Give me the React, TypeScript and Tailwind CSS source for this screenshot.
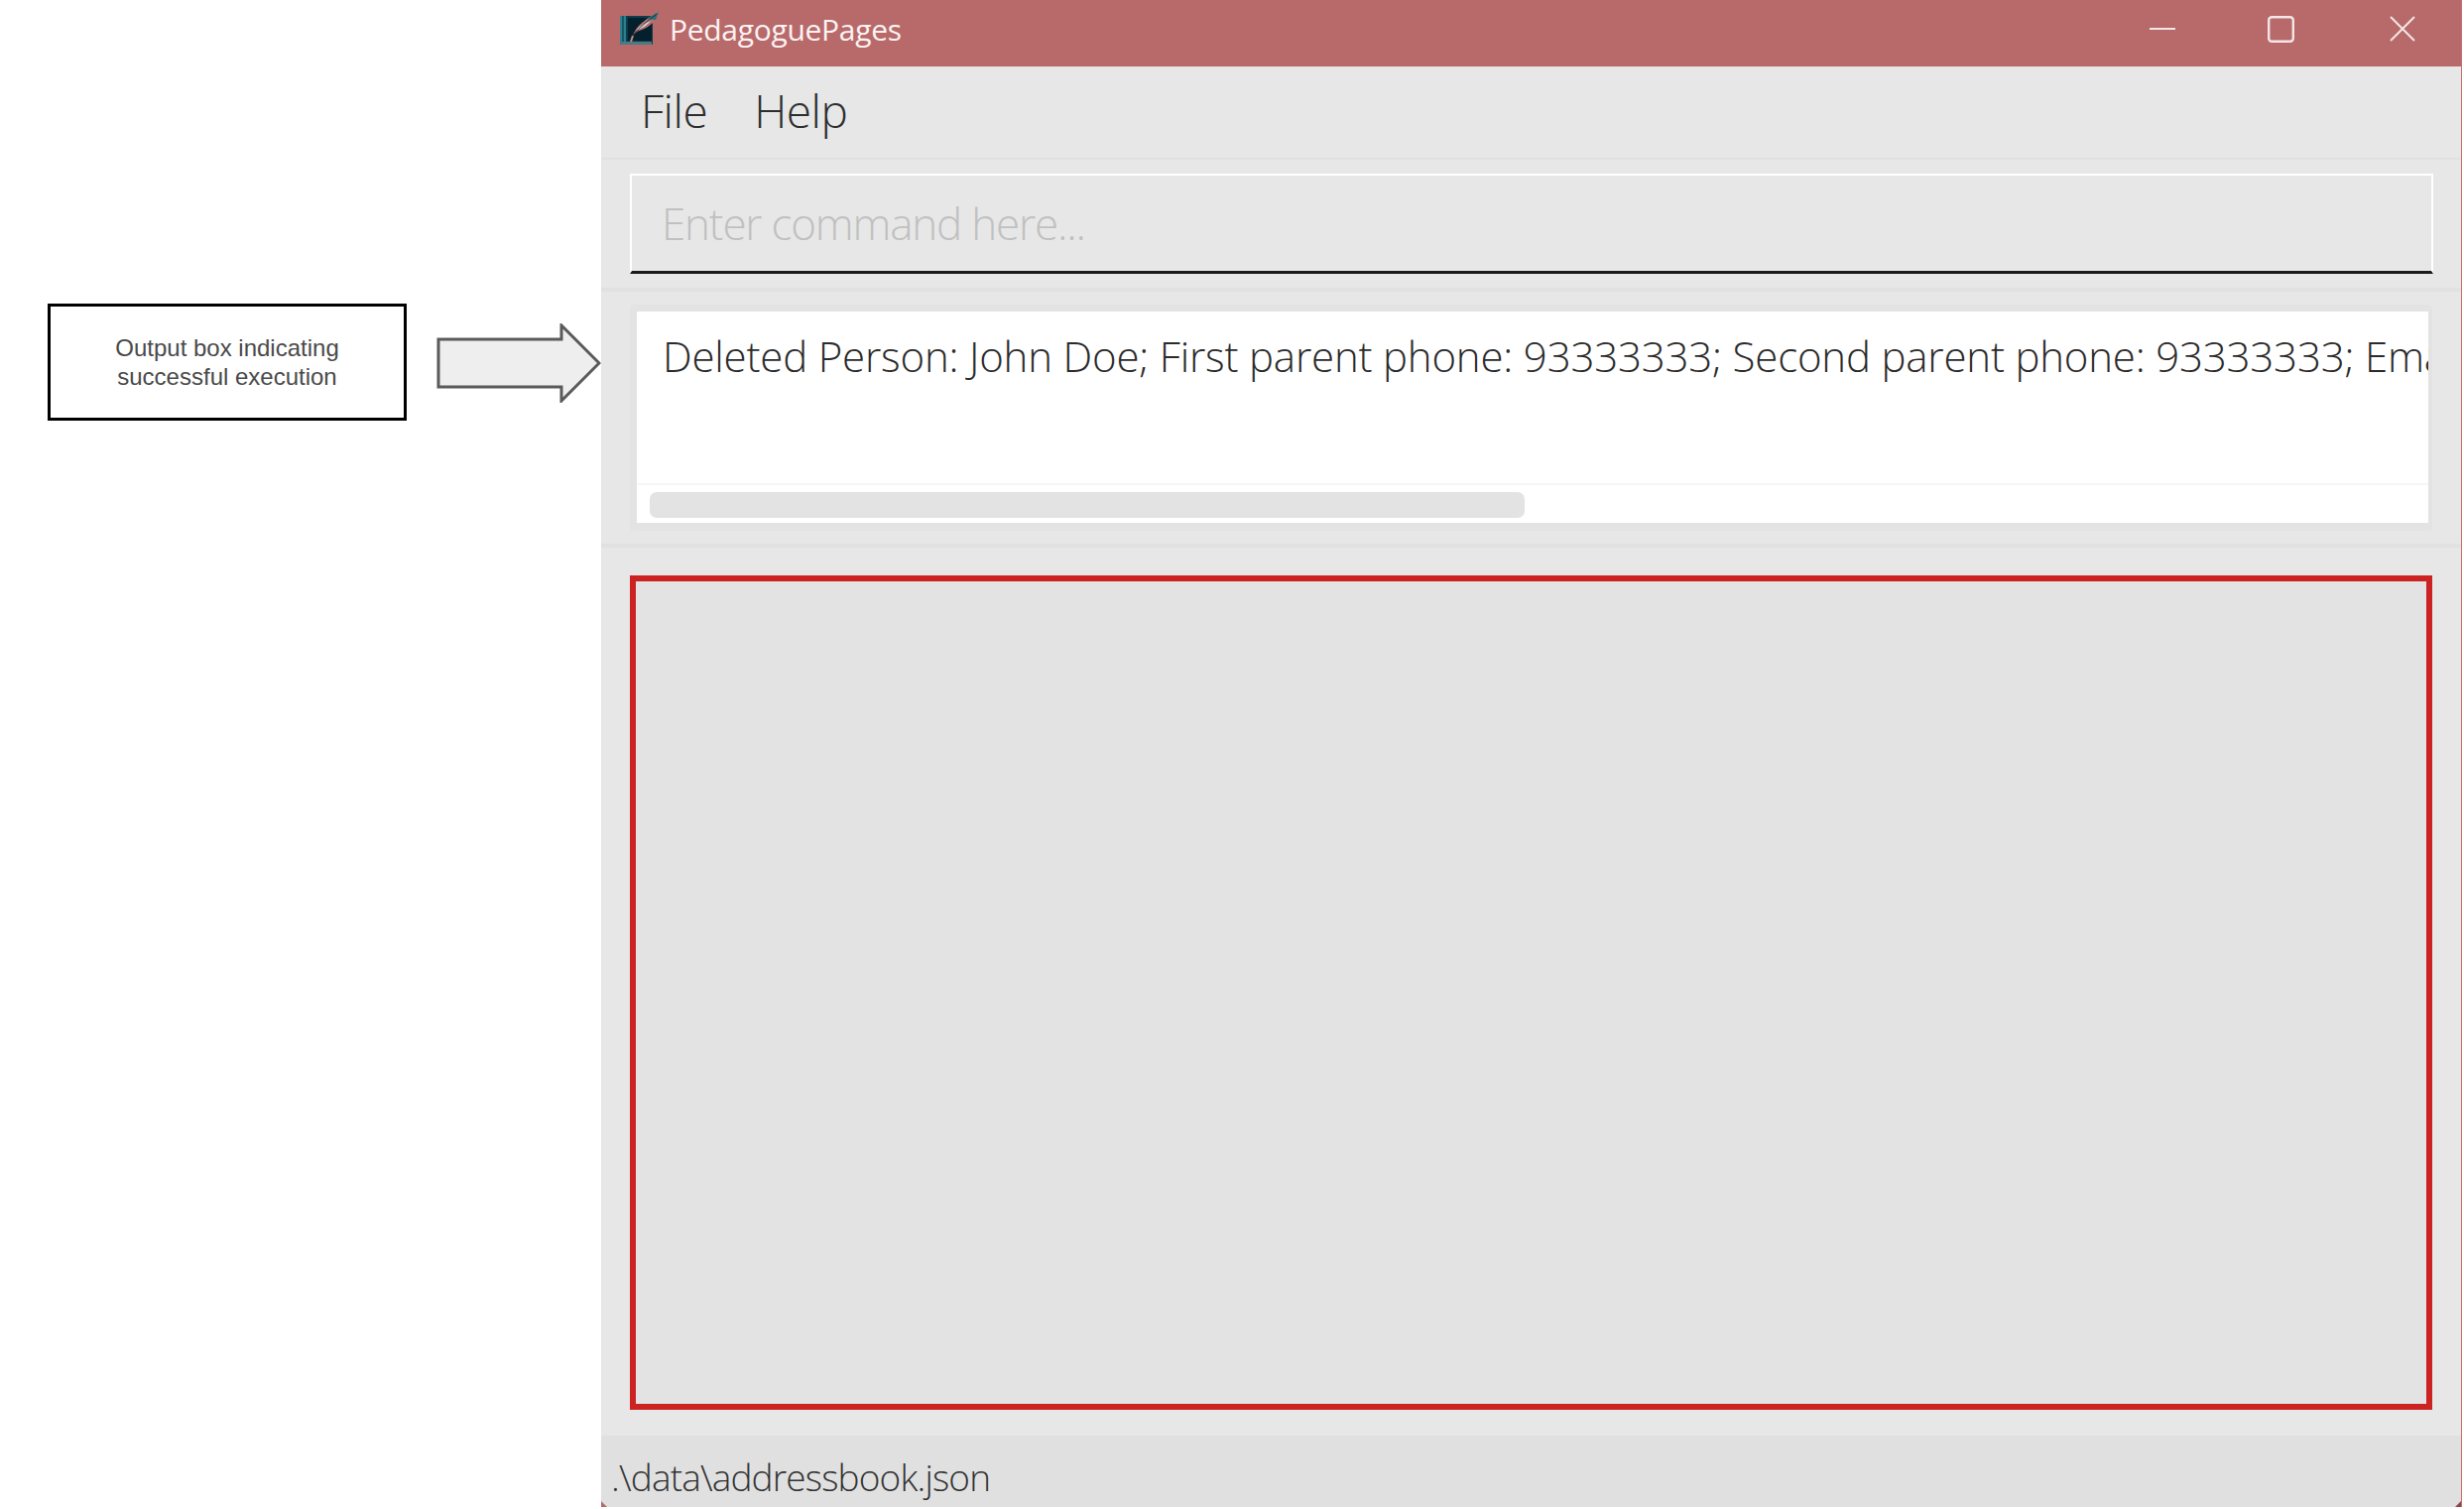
const face = "font-['Open_Sans','Noto_Sans',sans-serif] font-light";

function Logo() {
  return (
    <svg width="40" height="36" viewBox="0 0 40 36" className="shrink-0">
      <rect x="0" y="5" width="33" height="29" rx="1" fill="#0e3c4a" />
      <rect x="0" y="5" width="6" height="29" fill="#2a8090" />
      <path d="M3 5v29" stroke="#0b2a35" strokeWidth="1" />
      <rect x="8" y="7" width="24" height="23" fill="#04202c" />
      <path d="M1 31h31v3H1z" fill="#4b7a84" />
      <path d="M13 25C16 15 26 8 39 1c-2 9-9 15-17 18-4 1-7 3-9 6z" fill="#b4706e" />
      <path d="M27 8l12-7-3 8z" fill="#2c6f7c" />
      <path d="M16 20c4-5 9-8 15-10-3 4-8 7-15 10z" fill="#d5d5d5" />
      <path d="M14 24C19 17 27 11 37 3" stroke="#0c2a36" strokeWidth="0.8" fill="none" />
      <path d="M13 25l-2 6" stroke="#c98a88" strokeWidth="2" />
    </svg>
  );
}

function WindowControls() {
  return (
    <div className="flex items-center pr-[46px]">
      <svg width="26" height="26" viewBox="0 0 26 26" className="mr-[93px]">
        <path d="M0 13h26" stroke="#f4e6e6" strokeWidth="2" />
      </svg>
      <svg width="27" height="27" viewBox="0 0 27 27" className="mr-[96px]">
        <rect x="1.2" y="1.2" width="24.6" height="24.6" rx="3" fill="none" stroke="#f4e6e6" strokeWidth="2.4" />
      </svg>
      <svg width="26" height="26" viewBox="0 0 26 26">
        <path d="M1 1l24 24M25 1L1 25" stroke="#f4e6e6" strokeWidth="2" />
      </svg>
    </div>
  );
}

export default function App() {
  return (
    <div className="flex w-[2484px] h-[1521px] bg-white overflow-hidden">
      <div className="w-[606px] shrink-0 flex items-start pt-[306px] pl-[48px]">
        <div className="w-[362px] h-[118px] shrink-0 border-[3px] border-black flex items-center justify-center">
          <p className="font-['Liberation_Sans',sans-serif] text-[24px] leading-[29px] text-[#4a4a4a] text-center">
            Output box indicating
            <br />
            successful execution
          </p>
        </div>
        <svg width="166" height="80" viewBox="0 0 166 80" className="ml-[30px] mt-[20px] shrink-0">
          <path d="M2 16H126V2L164 40L126 78V64H2Z" fill="#eeeeee" stroke="#5a5a5a" strokeWidth="3" />
        </svg>
      </div>

      <div className="relative w-[1876px] h-[1519px] shrink-0 flex flex-col bg-[#e7e7e7] border-r border-[#c76d6d]">
        <div className="h-[67px] shrink-0 bg-[#b86a6a] flex items-center justify-between pl-[19px] pb-[9px]">
          <div className="flex items-center gap-[10px]">
            <Logo />
            <span className="font-['Open_Sans',sans-serif] text-[30px] tracking-[-0.3px] text-[#fbf3f3]">PedagoguePages</span>
          </div>
          <WindowControls />
        </div>

        <div className={`${face} h-[94px] shrink-0 border-b-2 border-[#e1e1e1] flex items-center gap-[47px] pl-[40px] pb-[3px] text-[46px] tracking-[-0.5px] text-[#2e2e2e]`}>
          <span>File</span>
          <span>Help</span>
        </div>

        <div className="h-[133px] shrink-0 border-b-4 border-[#e1e1e1] pl-[29px] pr-[28px] pt-[14px]">
          <div className={`${face} h-[101px] border-2 border-b-[3px] border-white border-b-[#1a1a1a] flex items-center pl-[30px] text-[44px] tracking-[-1.2px] text-[#c0c0c0]`}>
            Enter command here...
          </div>
        </div>

        <div className="h-[258px] shrink-0 border-b-4 border-[#e1e1e1] pl-[29px] pr-[29px] pt-[13px]">
          <div className="h-[228px] border-[7px] border-r-[4px] border-b-[8px] border-[#e3e3e3] bg-white rounded-[4px] flex flex-col overflow-hidden">
            <div className={`${face} h-[175px] border-b-2 border-[#f6f6f6] pl-[26px] pt-[13px] text-[42px] tracking-[-0.2px] text-[#2b2b2b] whitespace-nowrap overflow-hidden`}>
              Deleted Person: John Doe; First parent phone: 93333333; Second parent phone: 93333333; Ema
            </div>
            <div className="flex-1 pl-[13px] pt-[7px]">
              <div className="w-[882px] h-[26px] rounded-[7px] bg-[#e3e3e3]" />
            </div>
          </div>
        </div>

        <div className="flex-1 min-h-0 pl-[29px] pr-[29px] pt-[28px] pb-[26px]">
          <div className="h-full border-[6px] border-[#cc2222] bg-[#e3e3e3]" />
        </div>

        <div className={`${face} h-[72px] shrink-0 bg-[#e0e0e0] flex items-end pb-[3px] pl-[10px] text-[37px] tracking-[-0.85px] text-[#333333]`}>
          .\data\addressbook.json
        </div>

        <svg width="6" height="6" viewBox="0 0 6 6" className="absolute left-0 bottom-0">
          <path d="M0 0v6h6z" fill="#b86a6a" />
        </svg>
        <svg width="6" height="6" viewBox="0 0 6 6" className="absolute right-0 bottom-0">
          <path d="M6 0v6H0z" fill="#8a4a4a" />
        </svg>
      </div>
    </div>
  );
}
